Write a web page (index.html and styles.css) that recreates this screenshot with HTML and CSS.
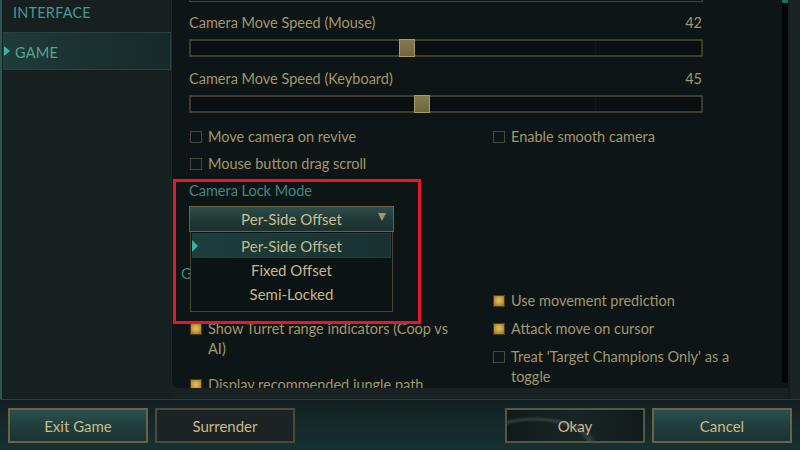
FILE: index.html
```html
<!DOCTYPE html>
<html>
<head>
<meta charset="utf-8">
<link rel="stylesheet" href="styles.css">
</head>
<body>
<div class="app">
  <div class="top">
    <aside class="sidebar">
      <div class="nav-item">INTERFACE</div>
      <div class="nav-item selected"><span class="marker"></span>GAME</div>
    </aside>
    <main class="panel">
      <div class="scroll">
        <div class="slider-tail"></div>

        <div class="label-row"><span>Camera Move Speed (Mouse)</span><span>42</span></div>
        <div class="slider"><span class="tick"></span><span class="thumb" style="left: 208px"></span></div>

        <div class="label-row"><span>Camera Move Speed (Keyboard)</span><span>45</span></div>
        <div class="slider"><span class="tick"></span><span class="thumb" style="left: 223px"></span></div>

        <div class="grid grid-a">
          <div class="col">
            <div class="check"><span class="box"></span><span class="txt">Move camera on revive</span></div>
            <div class="check"><span class="box"></span><span class="txt">Mouse button drag scroll</span></div>
          </div>
          <div class="col">
            <div class="check"><span class="box"></span><span class="txt">Enable smooth camera</span></div>
          </div>
        </div>

        <div class="lock">
          <div class="section">Camera Lock Mode</div>
          <div class="select">Per-Side Offset<span class="arrow"></span></div>
          <div class="options">
            <div class="option active"><span class="opt-marker"></span>Per-Side Offset</div>
            <div class="option">Fixed Offset</div>
            <div class="option">Semi-Locked</div>
          </div>
        </div>

        <div class="heading">G</div>

        <div class="grid grid-b">
          <div class="col col-left">
            <div class="check spacer"></div>
            <div class="check on"><span class="box"></span><span class="txt">Show Turret range indicators (Coop vs AI)</span></div>
            <div class="check on last"><span class="box"></span><span class="txt">Display recommended jungle path</span></div>
          </div>
          <div class="col">
            <div class="check on"><span class="box"></span><span class="txt">Use movement prediction</span></div>
            <div class="check on"><span class="box"></span><span class="txt">Attack move on cursor</span></div>
            <div class="check"><span class="box"></span><span class="txt">Treat 'Target Champions Only' as a toggle</span></div>
          </div>
        </div>
      </div>
      <div class="scrollbar"><div class="sb-thumb"></div></div>
    </main>
    <div class="edge"></div>
  </div>
  <footer class="bottom">
    <div class="btns">
      <button class="btn teal">Exit Game</button>
      <button class="btn dark">Surrender</button>
    </div>
    <div class="btns">
      <button class="btn okay">Okay</button>
      <button class="btn teal">Cancel</button>
    </div>
  </footer>
</div>
</body>
</html>
```

FILE: styles.css
```css
* { box-sizing: border-box; }
html, body { margin: 0; padding: 0; }
body {
  width: 800px;
  height: 450px;
  overflow: hidden;
  background: #182223;
  font-family: "Lato", "Open Sans", sans-serif;
  font-size: 14.5px;
  color: #a2976c;
}
.app { width: 800px; height: 450px; display: flex; flex-direction: column; }
.top { height: 399px; display: flex; }

.sidebar {
  width: 171px;
  flex: none;
  background: #162021;
  border-left: 2px solid #2a5550;
  padding-top: 3px;
}
.nav-item {
  height: 20px;
  line-height: 20px;
  padding-left: 11px;
  color: #4b978c;
  font-size: 14.5px;
  letter-spacing: 0.2px;
}
.nav-item.selected {
  margin-top: 9px;
  margin-left: 1px;
  height: 38px;
  line-height: 39px;
  padding-left: 11px;
  color: #56a397;
  background: linear-gradient(90deg, #1f3c3a 0%, #1a302f 55%, #18292a 100%);
  border: 1px solid #26413f;
  position: relative;
}
.marker {
  position: absolute;
  left: 0;
  top: 13px;
  width: 0; height: 0;
  border-top: 5px solid transparent;
  border-bottom: 5px solid transparent;
  border-left: 6px solid #3bb3a4;
}

.panel {
  width: 617px;
  height: 388px;
  flex: none;
  background: #0d1517;
  border-bottom-left-radius: 7px;
  border-left: 1px solid #1c2a2b;
  display: flex;
  overflow: hidden;
}
.scroll {
  width: 611px;
  padding-left: 17px;
  overflow: hidden;
}
.scrollbar {
  width: 6px;
  height: 383px;
  background: #020505;
}
.sb-thumb { height: 3px; background: #1e6b5f; }
.edge {
  flex: 1;
  border-left: 2px solid #141c1d;
  background: #1a2425;
}

.slider-tail {
  width: 514px;
  height: 2px;
  border: 1px solid #44432f;
  border-top: none;
  margin-bottom: 11px;
}
.label-row {
  width: 514px;
  height: 20px;
  line-height: 20px;
  display: flex;
  justify-content: space-between;
  padding-right: 1px;
}
.slider {
  width: 514px;
  height: 18px;
  margin-top: 6px;
  margin-bottom: 12px;
  background: #0a1011;
  border: 2px solid #3d3d2c;
  position: relative;
}
.tick {
  position: absolute;
  left: 404px;
  top: 0;
  width: 1px;
  height: 14px;
  background: #131a18;
}
.thumb {
  position: absolute;
  top: -2px;
  width: 16px;
  height: 18px;
  background: linear-gradient(#857a4c, #6f6540);
  border: 1px solid #a89a64;
}

.grid { display: flex; width: 600px; }
.col { display: flex; flex-direction: column; gap: 8px; }
.grid-a { padding-top: 2px; }
.grid-a .col { gap: 7px; }
.grid-a .col:first-child { width: 303px; }
.check {
  display: flex;
  align-items: flex-start;
  line-height: 20px;
}
.check.spacer { height: 20px; }
.box {
  width: 12px;
  height: 12px;
  flex: none;
  margin-top: 4px;
  margin-left: 1px;
  margin-right: 6px;
  border: 1.5px solid #4a473a;
}
.check.on .box {
  border: 1px solid #4a3e1c;
  background: radial-gradient(circle at 50% 45%, #e3c463 0%, #c9a13f 45%, #8c6a25 100%);
}
.txt { width: 258px; }

.lock {
  position: relative;
  margin-top: 7px;
  width: 206px;
}
.lock::after {
  content: "";
  position: absolute;
  left: -16px;
  top: -2px;
  width: 242px;
  height: 139px;
  border: 3px solid #e3192b;
  pointer-events: none;
  z-index: 5;
}
.section {
  height: 20px;
  line-height: 20px;
  color: #3e8a83;
}
.select {
  margin-top: 5px;
  width: 205px;
  height: 26px;
  line-height: 24px;
  text-align: center;
  color: #cbbd8e;
  background: linear-gradient(#2c4d4a, #1f3836 60%, #1b302f);
  border: 1px solid #6d6446;
  position: relative;
  font-size: 15px;
}
.arrow {
  position: absolute;
  right: 7px;
  top: 6px;
  width: 0; height: 0;
  border-left: 4.5px solid transparent;
  border-right: 4.5px solid transparent;
  border-top: 8px solid #a6986c;
}
.options {
  position: absolute;
  left: 1px;
  top: 51px;
  width: 203px;
  height: 80px;
  background: #0b1314;
  border: 1px solid #4a4634;
  border-top: none;
  padding: 1px 1px 0;
  z-index: 4;
}
.option {
  height: 24.5px;
  line-height: 24px;
  text-align: center;
  color: #c6b88b;
  font-size: 15px;
  position: relative;
}
.option.active {
  background: linear-gradient(90deg, #1d3f3d, #193634 60%, #183130);
  border: 1px solid #213c3a;
}
.opt-marker {
  position: absolute;
  left: -1px;
  top: 6px;
  width: 0; height: 0;
  border-top: 6px solid transparent;
  border-bottom: 6px solid transparent;
  border-left: 6px solid #36b0a1;
}

.heading {
  margin-top: 31px;
  margin-left: -8px;
  height: 20px;
  line-height: 20px;
  color: #3e8a83;
  font-size: 15px;
}
.grid-b { margin-top: 8px; }
.grid-b .col:first-child { width: 303px; }
.col-left .check.last { margin-top: 8px; }

.bottom {
  height: 51px;
  border-top: 1px solid #38392a;
  background: linear-gradient(#131f20, #15292a 50%, #163030);
  display: flex;
  justify-content: space-between;
  padding: 8px 8px 0;
}
.btns { display: flex; gap: 7px; }
.btn {
  width: 140px;
  height: 35px;
  font-family: "Lato", "Open Sans", sans-serif;
  font-size: 15px;
  color: #c9b98a;
  border: 2px solid #6a6146;
  padding: 0;
  cursor: default;
}
.btn.teal { background: linear-gradient(#2a514d, #203f3c 50%, #1a3331); }
.btn.dark { background: #1b2324; border-color: #4b4a3b; }
.btn.okay {
  border-color: #555544;
  background:
    radial-gradient(ellipse 90px 40px at 20% 110%, rgba(60,80,78,0.0) 55%, rgba(80,100,96,0.45) 62%, rgba(20,30,30,0) 70%),
    linear-gradient(90deg, #111a1b, #182425 50%, #121b1c);
}
```
